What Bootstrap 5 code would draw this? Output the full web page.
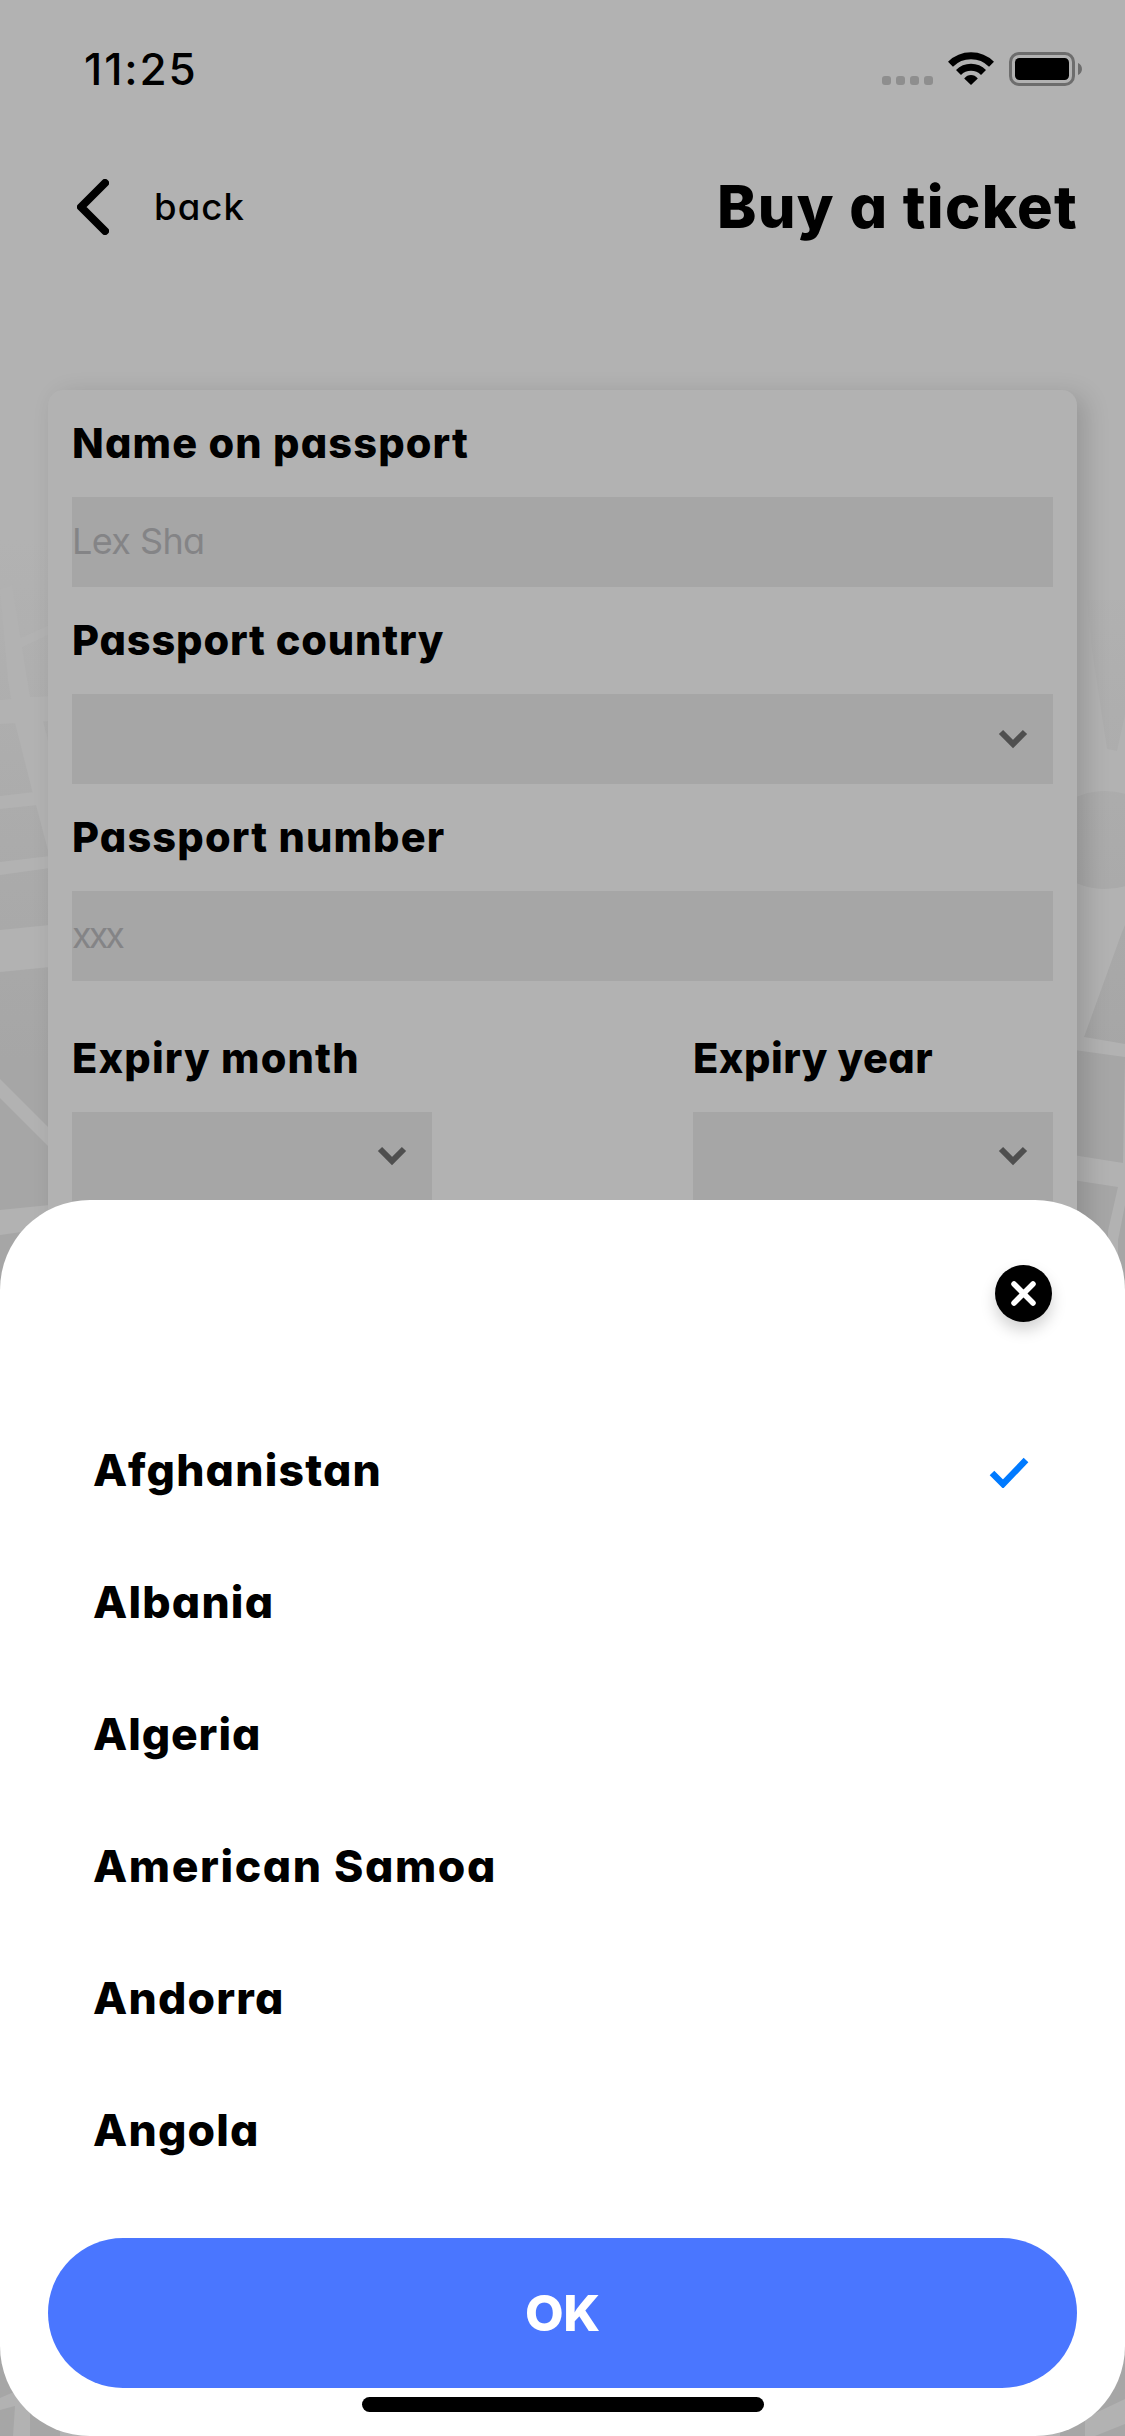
<!DOCTYPE html>
<html lang="en">
<head>
<meta charset="utf-8">
<meta name="viewport" content="width=device-width, initial-scale=1">
<title>Buy a ticket</title>
<link href="https://cdn.jsdelivr.net/npm/bootstrap@5.3.0/dist/css/bootstrap.min.css" rel="stylesheet">
<style>
  body{background:#b2b2b2;color:#000;font-family:Inter,"Open Sans",sans-serif;font-feature-settings:"cv11" 1;line-height:1;white-space:nowrap}
  .screen{width:1125px;height:2436px}
  .city-map{inset:0;z-index:0}
  .statusbar{height:138px;padding:45px 43px 0 84px}
  .status-icons{margin-top:6px}
  .clock{font-size:44px;line-height:48px;font-weight:500;letter-spacing:1.9px}
  .topbar{height:138px;padding:0 48px 0 77px}
  .back-label{font-size:36.500px;font-weight:500;letter-spacing:1.1px;margin-left:45px}
  .title{font-size:59.500px;font-weight:800;letter-spacing:1.3px;margin:0 -1px 0 0}
  .ticket{margin:114px 48px 0;height:900px;padding:24px;background:#b2b2b2;border:0;border-radius:15px;box-shadow:9px 5px 24px rgba(0,0,0,.15)}
  .lbl{font-size:41.500px;font-weight:800;line-height:58px;height:83px;margin:0;letter-spacing:1.15px}
  .lbl-country{letter-spacing:.85px}
  .lbl-year{letter-spacing:.5px}
  .lbl-next{margin-top:24px}
  .expiry{margin-top:48px}
  .field{height:90px;background:#a6a6a6;color:#848486;font-size:36px;letter-spacing:-.6px;padding:0 0 2px}
  .passport-no{letter-spacing:-3px}
  .chev{margin:1px 25px 0 0}
  .half{width:360px}
  .half .chev{margin:0 25px 0 0}
  .sheet{left:0;bottom:0;width:1125px;height:1236px;background:#fff;border-radius:90px;z-index:2;padding:65px 48px 0}
  .close-dot{width:57px;height:57px;background:#000;margin-right:25px;box-shadow:0 8px 15px rgba(0,0,0,.18)}
  .countries{margin-top:82px}
  .country{height:132px;padding:0 48px 0 45px;font-size:44.500px;font-weight:800;letter-spacing:1.2px}
  .spread{letter-spacing:1.6px}
  .snug{letter-spacing:.9px}
  .tick{margin-top:3px}
  .ok{height:150px;margin-top:42px;border:0;border-radius:75px;background:#4a76ff;color:#fff;font-size:50px;font-weight:800;letter-spacing:-.3px}
  .homebar{width:402px;height:15px;border-radius:8px;background:#000;margin:9px auto 0}
</style>
</head>
<body>
<div class="screen position-relative overflow-hidden">
  <svg class="city-map position-absolute" width="1125" height="2436" viewBox="0 0 1125 2436">
    <defs><linearGradient id="fade" gradientUnits="userSpaceOnUse" x1="0" y1="540" x2="0" y2="1060"><stop offset="0" stop-color="#b2b2b2"/><stop offset=".5" stop-color="#acacac"/><stop offset="1" stop-color="#a6a6a6"/></linearGradient></defs>
    <path fill="url(#fade)" d="M0 540H60V2436H0zM1060 2200H1125V2436H1060z"/>
    <path fill="#b2b2b2" d="M0 590L12 585 30 697 43 697V721L50 748V858L36 805 32 790 15 723 8 680zM0 700L50 696V721L0 724zM0 796L34 792 38 805 0 809zM0 862L50 856V868L0 875zM0 930L50 925V967L0 972zM0 1079L50 1129V1148L0 1098zM0 1210L50 1205V1228L0 1235zM14 641L50 625V634L16 650z"/>
    <path fill="url(#fade)" d="M1087 600L1092 650 1107 749 1117 751 1125 715V600zM1125 925L1122 932 1084 1037 1125 1044zM1060 1048L1125 1057 1123 1163 1060 1153zM1060 1178L1118 1187 1108 1231V1290H1060zM1125 1205L1118 1240V1330H1125z"/>
    <ellipse cx="1105" cy="840" rx="60" ry="49" fill="url(#fade)"/>
    <path fill="#b2b2b2" d="M0 2398L30 2385V2436H13L15 2406 0 2410zM1125 2399L1085 2418V2436H1095L1125 2424z"/>
  </svg>

  <div class="position-relative">
    <div class="statusbar d-flex justify-content-between align-items-start">
      <span class="clock">11:25</span>
      <svg class="status-icons" width="202" height="36" viewBox="880 51 202 36">
        <g fill="#8e8e8e"><rect x="882" y="76" width="9" height="9" rx="3"/><rect x="896" y="76" width="9" height="9" rx="3"/><rect x="910" y="76" width="9" height="9" rx="3"/><rect x="924" y="76" width="9" height="9" rx="3"/></g>
        <path d="M971 85l-6.800-6.600c3.700-4.600 9.900-4.600 13.600 0z"/>
        <path d="M958.500 72.500a17.500 17.500 0 0 1 25 0M950.500 64.300a29 29 0 0 1 41 0" fill="none" stroke="#000" stroke-width="7"/>
        <rect x="1010.500" y="53.500" width="63" height="31" rx="8.500" fill="none" stroke="#6d6d6d" stroke-width="3"/>
        <rect x="1015" y="58" width="54" height="22" rx="4.500"/><path fill="#6d6d6d" d="M1078 63c5.300 2 5.300 10 0 12z"/>
      </svg>
    </div>
    <header class="topbar d-flex justify-content-between align-items-center">
      <a class="d-flex align-items-center text-black text-decoration-none" href="#">
        <svg width="32" height="56" viewBox="0 0 32 56"><path d="M28 4L4 28 28 52" fill="none" stroke="#000" stroke-width="8" stroke-linecap="round" stroke-linejoin="round"/></svg>
        <span class="back-label">back</span>
      </a>
      <h1 class="title">Buy a ticket</h1>
    </header>

    <main class="ticket card">
      <label class="lbl">Name on passport</label>
      <div class="field d-flex align-items-center">Lex Sha</div>
      <label class="lbl lbl-next lbl-country">Passport country</label>
      <div class="field d-flex align-items-center justify-content-end"><svg class="chev" width="30" height="20" viewBox="0 0 30 20"><path d="M3 3L15 15 27 3" fill="none" stroke="#4f4f4f" stroke-width="6"/></svg></div>
      <label class="lbl lbl-next">Passport number</label>
      <div class="field passport-no d-flex align-items-center">xxx</div>
      <div class="d-flex justify-content-between expiry">
        <div class="half"><label class="lbl d-block">Expiry month</label><div class="field d-flex align-items-center justify-content-end"><svg class="chev" width="30" height="20" viewBox="0 0 30 20"><path d="M3 3L15 15 27 3" fill="none" stroke="#4f4f4f" stroke-width="6"/></svg></div></div>
        <div class="half"><label class="lbl lbl-year d-block">Expiry year</label><div class="field d-flex align-items-center justify-content-end"><svg class="chev" width="30" height="20" viewBox="0 0 30 20"><path d="M3 3L15 15 27 3" fill="none" stroke="#4f4f4f" stroke-width="6"/></svg></div></div>
      </div>
    </main>
  </div>

  <section class="sheet position-absolute">
    <div class="d-flex justify-content-end">
      <button class="close-dot btn p-0 rounded-circle d-flex align-items-center justify-content-center" aria-label="Close"><svg width="27" height="27" viewBox="0 0 27 27"><path d="M4 4L23 23M23 4L4 23" stroke="#fff" stroke-width="5.500" stroke-linecap="round"/></svg></button>
    </div>
    <div class="countries d-flex flex-column">
      <div class="country d-flex align-items-center justify-content-between">Afghanistan <svg class="tick" width="40" height="32" viewBox="0 0 40 32"><path d="M3 17L14 28 37 4" fill="none" stroke="#007aff" stroke-width="6.500"/></svg></div>
      <div class="country d-flex align-items-center">Albania</div>
      <div class="country snug d-flex align-items-center">Algeria</div>
      <div class="country spread d-flex align-items-center">American Samoa</div>
      <div class="country d-flex align-items-center">Andorra</div>
      <div class="country d-flex align-items-center">Angola</div>
    </div>
    <button class="ok btn w-100 d-flex align-items-center justify-content-center">OK</button>
    <div class="homebar"></div>
  </section>
</div>
<script src="https://cdn.jsdelivr.net/npm/bootstrap@5.3.0/dist/js/bootstrap.bundle.min.js"></script>
</body>
</html>
